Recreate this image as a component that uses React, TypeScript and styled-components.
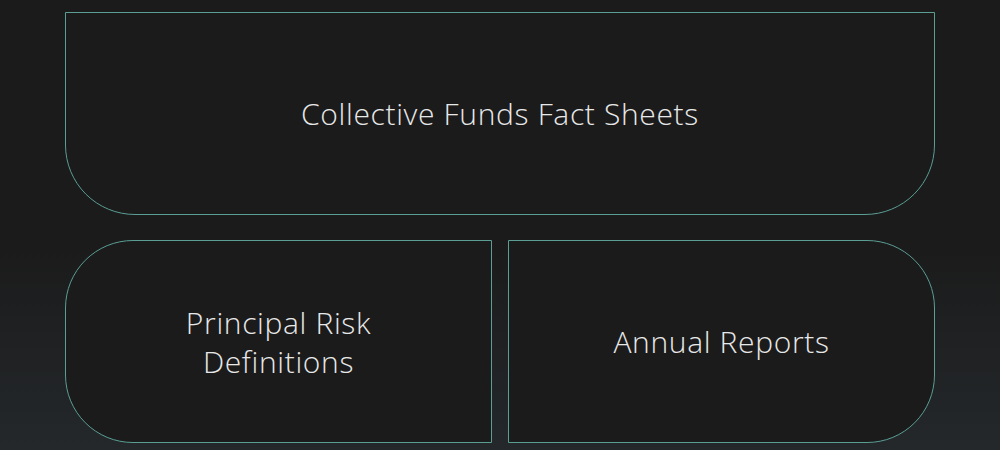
import React from "react";
import styled, { createGlobalStyle } from "styled-components";

const GlobalStyle = createGlobalStyle`
  html, body {
    margin: 0;
    padding: 0;
    height: 100%;
  }
  body {
    background: linear-gradient(180deg, #1b1b1b 0%, #1b1b1b 55%, #24282b 100%);
    font-family: "Open Sans", "Liberation Sans", sans-serif;
  }
`;

const Page = styled.div`
  width: 1000px;
  height: 450px;
  box-sizing: border-box;
  padding: 12px 65px 0;
  display: flex;
  flex-direction: column;
  gap: 25px;
`;

const Row = styled.div`
  display: grid;
  grid-template-columns: 1fr 1fr;
  gap: 16px;
`;

type CardProps = {
  $corners: string;
};

const Card = styled.a<CardProps>`
  height: 203px;
  box-sizing: border-box;
  border: 1px solid #5a9e94;
  border-radius: ${(p) => p.$corners};
  background-color: #1b1b1b;
  display: flex;
  align-items: center;
  justify-content: center;
  text-align: center;
  color: #e8e8e8;
  font-weight: 300;
  font-size: 30px;
  line-height: 39px;
  letter-spacing: 0.65px;
  text-decoration: none;
  cursor: pointer;
`;

const App: React.FC = () => {
  return (
    <>
      <GlobalStyle />
      <Page>
        <Card $corners="0 0 70px 70px">Collective Funds Fact Sheets</Card>
        <Row>
          <Card $corners="68px 0 0 68px">
            Principal Risk
            <br />
            Definitions
          </Card>
          <Card $corners="0 68px 68px 0">Annual Reports</Card>
        </Row>
      </Page>
    </>
  );
};

export default App;
